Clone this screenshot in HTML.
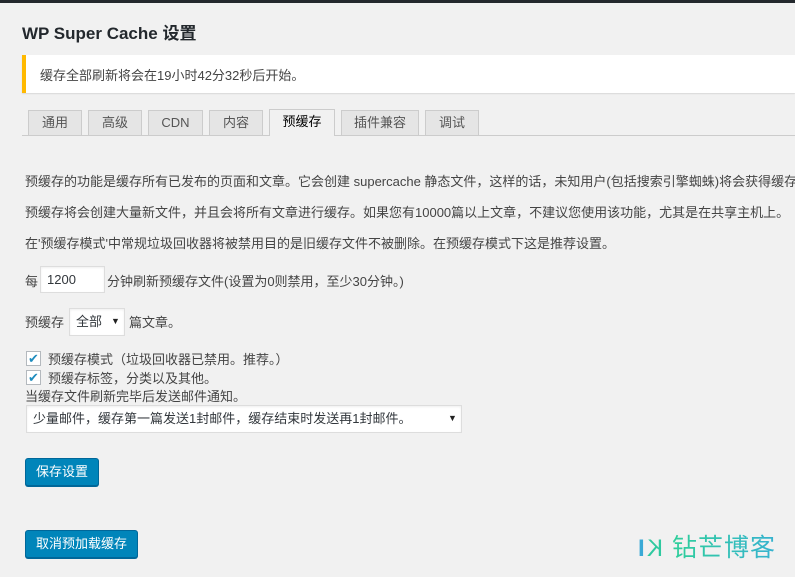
<!DOCTYPE html>
<html><head><meta charset="utf-8"><style>
*{box-sizing:border-box;margin:0;padding:0}
body{width:795px;height:577px;overflow:hidden;background:#f1f1f1;font-family:"Liberation Sans","Noto Sans CJK SC",sans-serif;font-size:13px;color:#23282d;position:relative}
.abs{position:absolute;white-space:nowrap}
.top{position:absolute;left:0;top:0;width:795px;height:3px;background:#23282d}
h1{position:absolute;left:22px;top:19px;font-size:17px;font-weight:600;color:#23282d}
.notice{position:absolute;left:22px;top:55px;width:773px;height:38px;background:#fff;border-left:4px solid #ffb900;box-shadow:0 1px 1px rgba(0,0,0,.1);padding:10px 0 0 14px;font-size:13px;color:#444}
.tabline{position:absolute;left:22px;top:135px;width:773px;height:1px;background:#ccc}
.tab{position:absolute;top:110px;height:25px;background:#e5e5e5;border:1px solid #ccc;border-bottom:none;font-weight:normal;font-size:13px;color:#555;text-align:center;line-height:24px}
.tab.a{background:#f1f1f1;color:#000;height:27px;top:109px}
p.abs{color:#444}
.inp{position:absolute;background:#fff;border:1px solid #ddd;box-shadow:inset 0 1px 2px rgba(0,0,0,.07);color:#32373c;padding-left:6px;line-height:25px}
.cb{position:absolute;left:26px;width:15px;height:15px;background:#fff;border:1px solid #b4b9be;color:#1e8cbe;font-size:13px;line-height:13px;text-align:center}
.btn{position:absolute;background:#0085ba;border:1px solid #006799;border-radius:3px;box-shadow:0 1px 0 #006799;color:#fff;font-size:13px;line-height:26px;text-align:center}
.arr{position:absolute;font-size:9px;color:#222}
</style></head><body>
<div class="top"></div>
<h1>WP Super Cache 设置</h1>
<div class="notice">缓存全部刷新将会在19小时42分32秒后开始。</div>
<div class="tabline"></div>
<div class="tab" style="left:28px;width:54px">通用</div>
<div class="tab" style="left:88px;width:54px">高级</div>
<div class="tab" style="left:148px;width:55px">CDN</div>
<div class="tab" style="left:209px;width:54px">内容</div>
<div class="tab a" style="left:269px;width:66px">预缓存</div>
<div class="tab" style="left:341px;width:78px">插件兼容</div>
<div class="tab" style="left:425px;width:54px">调试</div>
<p class="abs" style="left:25px;top:171px">预缓存的功能是缓存所有已发布的页面和文章。它会创建 supercache 静态文件，这样的话，未知用户(包括搜索引擎蜘蛛)将会获得缓存。</p>
<p class="abs" style="left:25px;top:202px">预缓存将会创建大量新文件，并且会将所有文章进行缓存。如果您有10000篇以上文章，不建议您使用该功能，尤其是在共享主机上。</p>
<p class="abs" style="left:25px;top:233px">在'预缓存模式'中常规垃圾回收器将被禁用目的是旧缓存文件不被删除。在预缓存模式下这是推荐设置。</p>
<p class="abs" style="left:25px;top:271px">每</p>
<div class="inp" style="left:40px;top:266px;width:65px;height:27px">1200</div>
<p class="abs" style="left:107px;top:271px">分钟刷新预缓存文件(设置为0则禁用，至少30分钟。)</p>
<p class="abs" style="left:25px;top:312px">预缓存</p>
<div class="inp" style="left:69px;top:308px;width:56px;height:28px;line-height:26px">全部</div>
<span class="arr" style="left:111px;top:316px">▼</span>
<p class="abs" style="left:129px;top:312px">篇文章。</p>
<div class="cb" style="top:351px">✔</div>
<p class="abs" style="left:48px;top:349px">预缓存模式（垃圾回收器已禁用。推荐。）</p>
<div class="cb" style="top:370px">✔</div>
<p class="abs" style="left:48px;top:368px">预缓存标签，分类以及其他。</p>
<p class="abs" style="left:25px;top:386px">当缓存文件刷新完毕后发送邮件通知。</p>
<div class="inp" style="left:26px;top:405px;width:436px;height:28px;line-height:26px">少量邮件，缓存第一篇发送1封邮件，缓存结束时发送再1封邮件。</div>
<span class="arr" style="left:448px;top:413px">▼</span>
<div class="btn" style="left:25px;top:458px;width:74px;height:28px">保存设置</div>
<div class="btn" style="left:25px;top:530px;width:113px;height:28px">取消预加载缓存</div>
<div class="abs" style="left:638px;top:534px;font-size:24px;line-height:30px;font-family:'Liberation Sans',sans-serif">
<span style="color:#3aa9d6;font-weight:bold">I</span><span style="display:inline-block;transform:scaleX(-1);color:#2fc9a0;margin-left:2px">K</span>
</div>
<div class="abs" style="left:672px;top:533px;font-size:25px;line-height:30px;letter-spacing:1px;background:linear-gradient(90deg,#2fcf9a,#36b2d0);-webkit-background-clip:text;background-clip:text;color:transparent">钻芒博客</div>
</body></html>
